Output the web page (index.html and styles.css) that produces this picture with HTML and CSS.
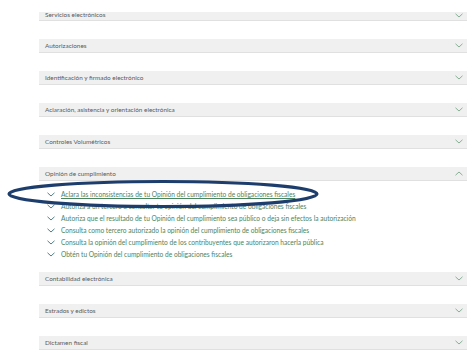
FILE: index.html
```html
<!DOCTYPE html>
<html lang="es">
<head>
    <meta charset="UTF-8">
    <title>Trámites y servicios</title>
    <link rel="stylesheet" href="styles.css">
</head>
<body>
    <div class="accordion">
        <!-- Secciones colapsadas -->
        <div class="section">
            <div class="section-head cut">
                <span>Servicios electrónicos</span>
                <svg class="chev" viewBox="0 0 8 5"><path d="M0.5 0.8 L4 4 L7.5 0.8"/></svg>
            </div>
        </div>
        <div class="section">
            <div class="section-head">
                <span>Autorizaciones</span>
                <svg class="chev" viewBox="0 0 8 5"><path d="M0.5 0.8 L4 4 L7.5 0.8"/></svg>
            </div>
        </div>
        <div class="section">
            <div class="section-head">
                <span>Identificación y firmado electrónico</span>
                <svg class="chev" viewBox="0 0 8 5"><path d="M0.5 0.8 L4 4 L7.5 0.8"/></svg>
            </div>
        </div>
        <div class="section">
            <div class="section-head">
                <span>Aclaración, asistencia y orientación electrónica</span>
                <svg class="chev" viewBox="0 0 8 5"><path d="M0.5 0.8 L4 4 L7.5 0.8"/></svg>
            </div>
        </div>
        <div class="section">
            <div class="section-head">
                <span>Controles Volumétricos</span>
                <svg class="chev" viewBox="0 0 8 5"><path d="M0.5 0.8 L4 4 L7.5 0.8"/></svg>
            </div>
        </div>

        <!-- Sección abierta -->
        <div class="section open">
            <div class="section-head">
                <span>Opinión de cumplimiento</span>
                <svg class="chev" viewBox="0 0 8 5"><path d="M0.5 4.2 L4 1 L7.5 4.2"/></svg>
            </div>
            <ul class="links">
                <li><svg class="bullet" viewBox="0 0 8 5"><path d="M0.5 0.8 L4 4 L7.5 0.8"/></svg><a href="#" class="active">Aclara las inconsistencias de tu Opinión del cumplimiento de obligaciones fiscales</a></li>
                <li><svg class="bullet" viewBox="0 0 8 5"><path d="M0.5 0.8 L4 4 L7.5 0.8"/></svg><a href="#">Autoriza a un tercero a consultar tu opinión del cumplimiento de obligaciones fiscales</a></li>
                <li><svg class="bullet" viewBox="0 0 8 5"><path d="M0.5 0.8 L4 4 L7.5 0.8"/></svg><a href="#">Autoriza que el resultado de tu Opinión del cumplimiento sea público o deja sin efectos la autorización</a></li>
                <li><svg class="bullet" viewBox="0 0 8 5"><path d="M0.5 0.8 L4 4 L7.5 0.8"/></svg><a href="#">Consulta como tercero autorizado la opinión del cumplimiento de obligaciones fiscales</a></li>
                <li><svg class="bullet" viewBox="0 0 8 5"><path d="M0.5 0.8 L4 4 L7.5 0.8"/></svg><a href="#">Consulta la opinión del cumplimiento de los contribuyentes que autorizaron hacerla pública</a></li>
                <li><svg class="bullet" viewBox="0 0 8 5"><path d="M0.5 0.8 L4 4 L7.5 0.8"/></svg><a href="#">Obtén tu Opinión del cumplimiento de obligaciones fiscales</a></li>
            </ul>
        </div>

        <div class="section">
            <div class="section-head">
                <span>Contabilidad electrónica</span>
                <svg class="chev" viewBox="0 0 8 5"><path d="M0.5 0.8 L4 4 L7.5 0.8"/></svg>
            </div>
        </div>
        <div class="section">
            <div class="section-head">
                <span>Estrados y edictos</span>
                <svg class="chev" viewBox="0 0 8 5"><path d="M0.5 0.8 L4 4 L7.5 0.8"/></svg>
            </div>
        </div>
        <div class="section">
            <div class="section-head">
                <span>Dictamen fiscal</span>
                <svg class="chev" viewBox="0 0 8 5"><path d="M0.5 0.8 L4 4 L7.5 0.8"/></svg>
            </div>
        </div>
    </div>

    <!-- Marca a mano sobre el primer enlace -->
    <svg class="highlight" viewBox="0 0 320 34">
        <ellipse cx="163" cy="17" rx="154" ry="12.5"/>
    </svg>
</body>
</html>
```

FILE: styles.css
```css
body {
    margin: 0;
    padding-top: 12px;
    background: #fff;
    font-family: Lato, 'Open Sans', sans-serif;
    color: #444;
}
.accordion {
    width: 428px;
    margin-left: 39px;
}
.section {
    margin-bottom: 18px;
}
.section.open {
    margin-bottom: 12px;
}
.section-head {
    height: 13px;
    display: flex;
    align-items: center;
    justify-content: space-between;
    padding: 0 4px 0 6px;
    background: #f0f0f0;
    border-bottom: 1px solid #e0e0e0;
    font-size: 6.4px;
    color: #5a5a5a;
}
.section-head.cut {
    height: 8px;
    align-items: flex-start;
}
.section-head.cut span {
    margin-top: -1px;
}
.section-head.cut .chev {
    margin-top: 1px;
}
.chev {
    width: 8px;
    height: 5px;
    fill: none;
    stroke: #7aa88a;
    stroke-width: 0.9;
}
.links {
    list-style: none;
    margin: 0;
    padding: 7px 0 0 8px;
}
.links li {
    height: 12px;
    display: flex;
    align-items: center;
    font-size: 6.6px;
}
.bullet {
    width: 8px;
    height: 5px;
    margin-right: 6px;
    fill: none;
    stroke: #3e6f7a;
    stroke-width: 0.9;
}
.links a {
    color: #4a8560;
    text-decoration: none;
    white-space: nowrap;
}
.links a.active {
    text-decoration: underline;
}
.highlight {
    position: absolute;
    left: 0;
    top: 177px;
    width: 320px;
    height: 34px;
    fill: none;
    stroke: #1d3d6c;
    stroke-width: 3.2;
}
```
